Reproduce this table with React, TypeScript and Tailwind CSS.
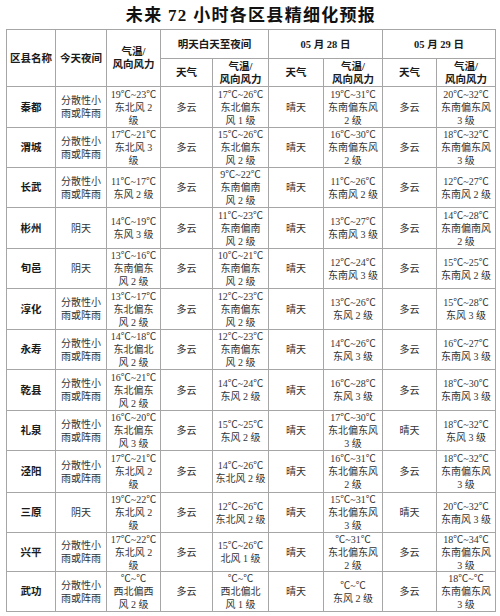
import React from 'react';

type Row = {
    name: string;
    tonight: string[];
    tonightTemp: string[];
    d1: string;
    d1Temp: string[];
    d2: string;
    d2Temp: string[];
    d3: string;
    d3Temp: string[];
};

const RAIN = ['分散性小', '雨或阵雨'];

const ROWS: Row[] = [
    { name: '秦都', tonight: RAIN, tonightTemp: ['19℃~23℃', '东北风 2', '级'], d1: '多云', d1Temp: ['17℃~26℃', '东北偏东', '风 1 级'], d2: '晴天', d2Temp: ['19℃~31℃', '东南偏东风', '2 级'], d3: '多云', d3Temp: ['20℃~32℃', '东南偏东风', '3 级'] },
    { name: '渭城', tonight: RAIN, tonightTemp: ['17℃~21℃', '东北风 3', '级'], d1: '多云', d1Temp: ['15℃~26℃', '东北偏东', '风 2 级'], d2: '晴天', d2Temp: ['16℃~30℃', '东南偏东风', '2 级'], d3: '多云', d3Temp: ['18℃~32℃', '东南偏东风', '3 级'] },
    { name: '长武', tonight: RAIN, tonightTemp: ['11℃~17℃', '东风 2 级'], d1: '多云', d1Temp: ['9℃~22℃', '东南偏南', '风 2 级'], d2: '晴天', d2Temp: ['11℃~26℃', '东南风 2 级'], d3: '多云', d3Temp: ['12℃~27℃', '东南风 2 级'] },
    { name: '彬州', tonight: ['阴天'], tonightTemp: ['14℃~19℃', '东风 3 级'], d1: '多云', d1Temp: ['11℃~23℃', '东南偏南', '风 2 级'], d2: '晴天', d2Temp: ['13℃~27℃', '东南风 3 级'], d3: '多云', d3Temp: ['14℃~28℃', '东南偏南风', '2 级'] },
    { name: '旬邑', tonight: ['阴天'], tonightTemp: ['13℃~16℃', '东南偏东', '风 2 级'], d1: '多云', d1Temp: ['10℃~21℃', '东南偏东', '风 2 级'], d2: '晴天', d2Temp: ['12℃~24℃', '东南风 3 级'], d3: '多云', d3Temp: ['15℃~25℃', '东南风 2 级'] },
    { name: '淳化', tonight: RAIN, tonightTemp: ['13℃~17℃', '东北偏东', '风 2 级'], d1: '多云', d1Temp: ['12℃~23℃', '东南偏东', '风 2 级'], d2: '晴天', d2Temp: ['13℃~26℃', '东风 2 级'], d3: '多云', d3Temp: ['15℃~28℃', '东风 3 级'] },
    { name: '永寿', tonight: RAIN, tonightTemp: ['14℃~18℃', '东北偏北', '风 2 级'], d1: '多云', d1Temp: ['12℃~23℃', '东南偏东', '风 2 级'], d2: '晴天', d2Temp: ['14℃~26℃', '东风 3 级'], d3: '多云', d3Temp: ['16℃~27℃', '东南风 3 级'] },
    { name: '乾县', tonight: RAIN, tonightTemp: ['16℃~21℃', '东北偏东', '风 2 级'], d1: '多云', d1Temp: ['14℃~24℃', '东风 2 级'], d2: '晴天', d2Temp: ['16℃~28℃', '东风 3 级'], d3: '多云', d3Temp: ['18℃~30℃', '东南风 3 级'] },
    { name: '礼泉', tonight: RAIN, tonightTemp: ['16℃~20℃', '东北偏东', '风 3 级'], d1: '多云', d1Temp: ['15℃~25℃', '东风 2 级'], d2: '晴天', d2Temp: ['17℃~30℃', '东北偏东风', '3 级'], d3: '晴天', d3Temp: ['18℃~32℃', '东风 3 级'] },
    { name: '泾阳', tonight: RAIN, tonightTemp: ['17℃~21℃', '东北风 2', '级'], d1: '多云', d1Temp: ['14℃~26℃', '东北风 2 级'], d2: '晴天', d2Temp: ['16℃~31℃', '东北偏东风', '2 级'], d3: '多云', d3Temp: ['18℃~32℃', '东南偏东风', '3 级'] },
    { name: '三原', tonight: ['阴天'], tonightTemp: ['19℃~22℃', '东北风 2', '级'], d1: '多云', d1Temp: ['12℃~26℃', '东北风 2 级'], d2: '晴天', d2Temp: ['15℃~31℃', '东北偏东风', '3 级'], d3: '晴天', d3Temp: ['20℃~32℃', '东南风 3 级'] },
    { name: '兴平', tonight: RAIN, tonightTemp: ['17℃~22℃', '东北风 2', '级'], d1: '多云', d1Temp: ['15℃~26℃', '北风 1 级'], d2: '晴天', d2Temp: ['℃~31℃', '东北偏东风', '2 级'], d3: '多云', d3Temp: ['18℃~34℃', '东南偏东风', '3 级'] },
    { name: '武功', tonight: RAIN, tonightTemp: ['℃~℃', '西北偏西', '风 2 级'], d1: '多云', d1Temp: ['℃~℃', '西北偏北', '风 1 级'], d2: '晴天', d2Temp: ['℃~℃', '东风 2 级'], d3: '多云', d3Temp: ['18℃~℃', '东南偏东风', '3 级'] },
];

const FONT = 'font-["Liberation_Serif","Noto_Sans_CJK_SC",serif]';

const Cell: React.FC<{ lines: string[]; bold?: boolean; className?: string }> = ({ lines, bold, className = '' }) => (
    <div className={`bg-white flex flex-col items-center justify-center text-center leading-[13px] ${bold ? 'font-bold text-[10.5px] text-[#1a1a1a]' : 'text-[10px] text-[#333]'} ${className}`}>
        {lines.map((l, i) => (
            <span key={i} className="whitespace-nowrap">{l}</span>
        ))}
    </div>
);

const TEMP_HEAD = ['气温/', '风向风力'];

export default function App() {
    return (
        <div className={`w-[500px] h-[616px] bg-white ${FONT}`}>
            {/* Title */}
            <div className="h-[29px] w-[490px] ml-[6px] flex items-center justify-center pt-[2px]">
                <h1 className="text-[17px] font-bold tracking-[1.3px] text-[#111]">未来 72 小时各区县精细化预报</h1>
            </div>

            {/* Table */}
            <div className="ml-[6px] w-fit grid grid-cols-[48px_50px_53px_51px_55px_54px_58px_53px_58px] grid-rows-[28px_27px_40px_39px_39px_40px_39px_40px_39px_40px_39px_41px_39px_38px_39px] gap-px p-px bg-[#a6a6a6]">
                <Cell bold lines={['区县名称']} className="row-span-2" />
                <Cell bold lines={['今天夜间']} className="row-span-2" />
                <Cell bold lines={TEMP_HEAD} className="row-span-2" />
                <Cell bold lines={['明天白天至夜间']} className="col-span-2" />
                <Cell bold lines={['05 月 28 日']} className="col-span-2" />
                <Cell bold lines={['05 月 29 日']} className="col-span-2" />
                <Cell bold lines={['天气']} />
                <Cell bold lines={TEMP_HEAD} />
                <Cell bold lines={['天气']} />
                <Cell bold lines={TEMP_HEAD} />
                <Cell bold lines={['天气']} />
                <Cell bold lines={TEMP_HEAD} />

                {ROWS.map(r => (
                    <React.Fragment key={r.name}>
                        <Cell bold lines={[r.name]} />
                        <Cell lines={r.tonight} />
                        <Cell lines={r.tonightTemp} />
                        <Cell lines={[r.d1]} />
                        <Cell lines={r.d1Temp} />
                        <Cell lines={[r.d2]} />
                        <Cell lines={r.d2Temp} />
                        <Cell lines={[r.d3]} />
                        <Cell lines={r.d3Temp} />
                    </React.Fragment>
                ))}
            </div>
        </div>
    );
}
